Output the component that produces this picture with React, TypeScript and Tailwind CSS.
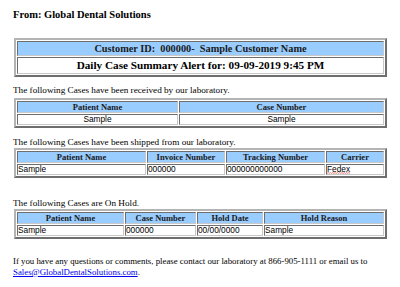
import React from "react";

const serif = { fontFamily: '"Liberation Serif", "Times New Roman", serif' };
const sans = { fontFamily: '"Liberation Sans", Arial, sans-serif' };

type Col = { label: string; w?: string; value: string; center?: boolean; wavy?: boolean };

// Email-style bordered table: outset frame, inset cells
const frame =
  "table-fixed border-separate border-spacing-[1px] border-2 border-t-[#b4b4b4] border-l-[#b4b4b4] border-r-[#6e6e6e] border-b-[#6e6e6e]";
const cell = "border border-t-[#6e6e6e] border-l-[#6e6e6e] border-r-[#c8c8c8] border-b-[#c8c8c8] p-0";

function CaseTable({ cols }: { cols: Col[] }) {
  return (
    <table className={`${frame} ml-[1px] w-[373px]`}>
      <tbody>
        <tr>
          {cols.map((c) => (
            <th
              key={c.label}
              className={`${cell} ${c.w ?? ""} h-[12px] bg-[#99ccff] text-center text-[8.5px] font-bold leading-[10px] text-[#1a1a1a]`}
              style={serif}
            >
              {c.label}
            </th>
          ))}
        </tr>
        <tr>
          {cols.map((c) => (
            <td
              key={c.label}
              className={`${cell} h-[11px] bg-white text-[8.3px] leading-[9px] text-black ${c.center ? "text-center" : "text-left"}`}
              style={sans}
            >
              {c.wavy ? (
                <span className="relative inline-block leading-[8px]">
                  {c.value}
                  <svg className="absolute left-0 top-[7px] w-full h-[2px]" viewBox="0 0 20 2" preserveAspectRatio="none">
                    <path d="M0 1.5 L1 0.5 L2 1.5 L3 0.5 L4 1.5 L5 0.5 L6 1.5 L7 0.5 L8 1.5 L9 0.5 L10 1.5 L11 0.5 L12 1.5 L13 0.5 L14 1.5 L15 0.5 L16 1.5 L17 0.5 L18 1.5 L19 0.5 L20 1.5" fill="none" stroke="#e53935" strokeWidth="0.6" />
                  </svg>
                </span>
              ) : (
                c.value
              )}
            </td>
          ))}
        </tr>
      </tbody>
    </table>
  );
}

export default function App() {
  return (
    <div className="w-[400px] h-[287px] bg-white overflow-hidden pl-[13px] pt-[8px] text-black" style={serif}>
      <div className="text-[10.5px] font-bold leading-[14px]">From: Global Dental Solutions</div>

      <table className={`${frame} mt-[16px] ml-[1px] w-[373px]`}>
        <tbody>
          <tr>
            <td className={`${cell} h-[15px] bg-[#99ccff] text-center text-[10.3px] font-bold leading-[12px] text-[#1a1a1a]`}>
              Customer ID:&nbsp; 000000-&nbsp; Sample Customer Name
            </td>
          </tr>
          <tr>
            <td className={`${cell} h-[17px] bg-white text-center text-[11.2px] font-bold leading-[13px]`}>
              Daily Case Summary Alert for: 09-09-2019 9:45 PM
            </td>
          </tr>
        </tbody>
      </table>

      <div className="mt-[7px] text-[9.2px] leading-[12px]">The following Cases have been received by our laboratory.</div>
      <div className="mt-[2px]">
        <CaseTable
          cols={[
            { label: "Patient Name", w: "w-[161px]", value: "Sample", center: true },
            { label: "Case Number", value: "Sample", center: true },
          ]}
        />
      </div>

      <div className="mt-[8px] text-[9.2px] leading-[12px]">The following Cases have been shipped from our laboratory.</div>
      <CaseTable
        cols={[
          { label: "Patient Name", w: "w-[129px]", value: "Sample" },
          { label: "Invoice Number", w: "w-[78px]", value: "000000" },
          { label: "Tracking Number", w: "w-[99px]", value: "000000000000" },
          { label: "Carrier", value: "Fedex", wavy: true },
        ]}
      />

      <div className="mt-[19px] text-[9.2px] leading-[12px]">The following Cases are On Hold.</div>
      <CaseTable
        cols={[
          { label: "Patient Name", w: "w-[107px]", value: "Sample" },
          { label: "Case Number", w: "w-[71px]", value: "000000" },
          { label: "Hold Date", w: "w-[66px]", value: "00/00/0000" },
          { label: "Hold Reason", value: "Sample" },
        ]}
      />

      <div className="mt-[17px] text-[8.8px] leading-[11px]">
        If you have any questions or comments, please contact our laboratory at 866-905-1111 or email us to
        <br />
        <a href="#" className="text-[#0000ee] underline">Sales@GlobalDentalSolutions.com</a>.
      </div>
    </div>
  );
}
